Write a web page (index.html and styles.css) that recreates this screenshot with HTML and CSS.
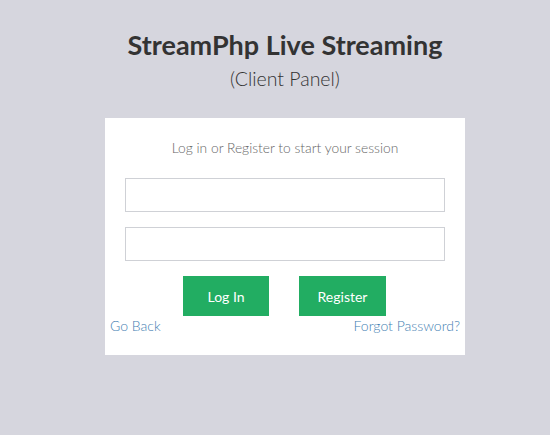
FILE: index.html
```html
<!DOCTYPE html>
<html>
<head>
<meta charset="utf-8">
<link rel="stylesheet" href="styles.css">
</head>
<body>
<div class="login-box">
  <div class="logo">StreamPhp Live Streaming</div>
  <div class="sub">(Client Panel)</div>
  <div class="box">
    <p class="msg">Log in or Register to start your session</p>
    <input class="field" type="text">
    <input class="field" type="password">
    <div class="actions">
      <button class="btn btn-login">Log In</button>
      <button class="btn btn-register">Register</button>
    </div>
    <div class="links">
      <a href="#" class="link">Go Back</a>
      <a href="#" class="link">Forgot Password?</a>
    </div>
  </div>
</div>
</body>
</html>
```
FILE: styles.css
```css
html, body {
  margin: 0;
  padding: 0;
}
body {
  background: #d6d6de;
  font-family: "Lato", "Open Sans", sans-serif;
  height: 435px;
  padding-left: 20px;
  box-sizing: border-box;
}
.login-box {
  width: 360px;
  margin: 0 auto;
  padding-top: 27px;
}
.logo {
  text-align: center;
  font-size: 27px;
  font-weight: 700;
  line-height: 36px;
  color: #333333;
}
.sub {
  text-align: center;
  font-size: 19.5px;
  font-weight: 300;
  line-height: 28px;
  color: #333333;
  margin-top: 2px;
  margin-bottom: 25px;
}
.box {
  background: #ffffff;
  padding: 20px 20px 19px;
}
.msg {
  margin: 0 0 20px;
  text-align: center;
  font-size: 13.8px;
  line-height: 20px;
  font-weight: 300;
  color: #666666;
}
.field {
  display: block;
  box-sizing: border-box;
  width: 100%;
  height: 34px;
  margin: 0 0 15px;
  border: 1px solid #cfd1d6;
  padding: 6px 12px;
  font-size: 14px;
  outline: none;
}
.actions {
  display: flex;
  justify-content: center;
  gap: 30px;
  padding-right: 1px;
}
.btn {
  height: 40px;
  border: none;
  background: #22ad62;
  color: #ffffff;
  font-family: inherit;
  font-size: 14px;
  padding: 0;
}
.btn-login { width: 86px; }
.btn-register { width: 87px; }
.links {
  display: flex;
  justify-content: space-between;
  margin: 0 -15px;
  line-height: 20px;
}
.link {
  font-size: 14px;
  font-weight: 300;
  color: #3f80b2;
  text-decoration: none;
}
```
